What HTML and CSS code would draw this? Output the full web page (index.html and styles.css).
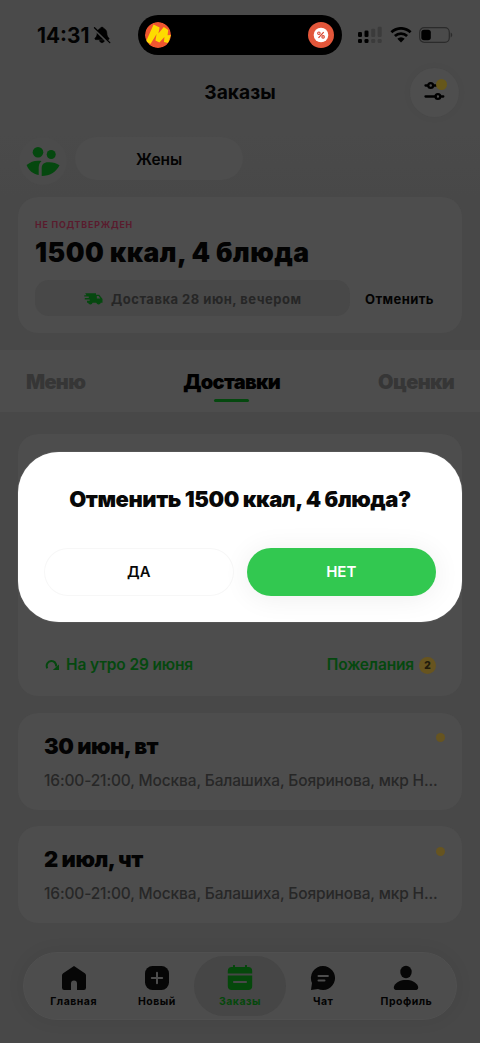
FILE: index.html
```html
<!DOCTYPE html>
<html lang="ru">
<head>
<meta charset="utf-8">
<meta name="viewport" content="width=device-width, initial-scale=1">
<title>Заказы</title>
<link rel="stylesheet" href="styles.css">
</head>
<body>
<div class="screen">
  <div class="status">
    <div class="clock"><span class="time">14:31</span>
      <svg class="bell" width="18" height="18" viewBox="0 0 18 18"><path d="M9 1.200c.9 0 1.500.5 1.700 1.300 2 .7 3 2.400 3.100 4.500.1 2.800.6 3.700 1.900 4.900.7.700.4 1.700-.6 1.700H2.900c-1 0-1.300-1-.6-1.700C3.600 10.700 4.100 9.800 4.200 7c.1-2.100 1.100-3.800 3.100-4.500C7.500 1.700 8.100 1.200 9 1.200zM6.600 14.500h4.800C11.100 15.900 10.200 16.600 9 16.600s-2.100-.7-2.400-2.100z" fill="#000" stroke="#000" stroke-width=".7"/><path d="M1.800 3.400L16 17.400" stroke="#4a4a4a" stroke-width="2.200"/><path d="M1.500 1.800L16.800 16.600" stroke="#000" stroke-width="1.300" stroke-linecap="round"/></svg>
    </div>
    <div class="island">
      <svg width="26" height="26" viewBox="0 0 26 26"><clipPath id="disc"><circle cx="13" cy="13" r="13"/></clipPath><g clip-path="url(#disc)"><circle cx="13" cy="13" r="13" fill="#f0562f"/><path d="M1 19.500L8.600 2.500l6 3-1.200 6 5.400-6.600 4.400 3-.6 5.400 3.400-.3-3 8-4-1 .4-5-5 5.500-4-2 1.200-6.500L5.500 22z" fill="#fedb00"/></g></svg>
      <svg width="26" height="26" viewBox="0 0 26 26"><circle cx="13" cy="13" r="13" fill="#e2563a"/><circle cx="13" cy="13" r="7.300" fill="#fff"/><path d="M10.500 15.900l5.200-5.700" stroke="#d9452f" stroke-width="1.200"/><circle cx="10.900" cy="11.200" r="1.250" fill="none" stroke="#d9452f" stroke-width="1.100"/><circle cx="15.100" cy="14.900" r="1.250" fill="none" stroke="#d9452f" stroke-width="1.100"/></svg>
    </div>
    <div class="signals">
      <svg width="25" height="18" viewBox="0 0 25 18"><g fill="#000"><rect x="0" y="6" width="4" height="5" rx="1.300"/><rect x="6.500" y="4.500" width="4" height="6.500" rx="1.300"/><rect x="0" y="13" width="4" height="4" rx="1.300"/><rect x="6.500" y="13" width="4" height="4" rx="1.300"/></g><g fill="#3b3b3b"><rect x="13.200" y="2.700" width="4" height="8.300" rx="1.300"/><rect x="19.700" y=".7" width="4" height="10.300" rx="1.300"/><rect x="13.200" y="13" width="4" height="4" rx="1.300"/><rect x="19.700" y="13" width="4" height="4" rx="1.300"/></g></svg>
      <svg width="22" height="16" viewBox="0 0 22 16"><g fill="none" stroke="#000" stroke-width="2.700"><path d="M1.400 5.200a13.800 13.800 0 0 1 19.200 0"/><path d="M4.900 9a8.800 8.800 0 0 1 12.200 0"/></g><path d="M7.300 11.700a5.300 5.300 0 0 1 7.400 0L11 15.500z" fill="#000"/></svg>
      <svg width="35" height="16" viewBox="0 0 35 16"><rect x=".7" y=".7" width="29.600" height="14.600" rx="4.500" fill="none" stroke="#2b2b2b" stroke-width="1.200"/><rect x="2.300" y="2.800" width="9.500" height="10.400" rx="2.700" fill="#000"/><path d="M31.700 5.600c2 .8 2 4 0 4.800z" fill="#2b2b2b"/></svg>
    </div>
  </div>

  <header class="header">
    <h1>Заказы</h1>
    <div class="filter">
      <svg width="22" height="20" viewBox="0 0 22 20"><g fill="none" stroke="#000" stroke-width="2.300" stroke-linecap="round"><path d="M1.500 4.500h2.400M9.500 4.500h9M1.500 15.500h10.200M17.500 15.500h1.800"/><circle cx="6.700" cy="4.500" r="2.400"/><circle cx="13.900" cy="15.500" r="2.400"/></g></svg>
      <i></i>
    </div>
  </header>

  <div class="people">
    <div class="group">
      <svg width="34" height="30" viewBox="0 0 34 30"><g fill="#05480f"><circle cx="12" cy="5.300" r="5.300"/><circle cx="25.200" cy="7.500" r="4.500"/><path d="M.6 18c4.600-4 9.700-5 14.900-4-2 1.800-2.800 4-2.800 7v7C7 27 2.600 23.500.6 18z"/><path d="M15.700 29V21.500c0-4 2-6.200 6.500-6.200 4.500-.2 8 .7 11.300 2.900C30 25 23.800 29 15.700 29z"/></g></svg>
    </div>
    <div class="chip">Жены</div>
  </div>

  <section class="card order">
    <div class="state">НЕ ПОДТВЕРЖДЕН</div>
    <h2>1500 ккал, 4 блюда</h2>
    <div class="order-row">
      <div class="delivery">
        <svg width="19" height="12" viewBox="0 0 19 12"><path d="M1.200.2H12v1.600h3.200L18.500 6v3.800h-1.700a2.300 2.300 0 0 1-4.500 0H8.600a2.300 2.300 0 0 1-4.500 0H3V7.800h2.700V6.500H.8V5h4V3.500H.3V2.200h2.200z" fill="#05480f"/><path d="M12.800 3v2.400h3.500L14.600 3z" fill="#484848"/></svg>
        <span>Доставка 28 июн, вечером</span>
      </div>
      <div class="cancel">Отменить</div>
    </div>
  </section>

  <nav class="tabs"><span class="t1">Меню</span><span class="t2">Доставки</span><span class="t3">Оценки</span></nav>

  <section class="card first">
    <div class="link"><svg width="15" height="12" viewBox="0 0 15 12"><path d="M2.200 9.300C.6 5.300 3 2 6.300 2c3 0 4.700 2 5 5.500" fill="none" stroke="#05480f" stroke-width="2"/><path d="M14 5.500v5.500H7.800z" fill="#05480f"/></svg><span class="l1">На утро 29 июня</span></div>
    <div class="link"><span class="l2">Пожелания</span><b>2</b></div>
  </section>
  <section class="card day"><h3 class="d1">30 июн, вт</h3><p>16:00-21:00, Москва, Балашиха, Бояринова, мкр Н...</p><i></i></section>
  <section class="card day"><h3 class="d2">2 июл, чт</h3><p>16:00-21:00, Москва, Балашиха, Бояринова, мкр Н...</p><i></i></section>

  <nav class="bar">
    <div class="item"><svg width="26" height="26" viewBox="0 0 26 26"><path d="M13 1l10.800 7.200q1.200.8 1.200 2.200v12.400Q25 25 22.800 25H16v-6.500a3 3 0 0 0-6 0V25H3.200Q1 25 1 22.800V10.400Q1 9 2.200 8.200z"/></svg><span>Главная</span></div>
    <div class="item"><svg width="26" height="26" viewBox="0 0 26 26"><rect x="1" y="1" width="24" height="24" rx="7.500"/><path d="M13 7.800v10.400M7.800 13h10.400" stroke="#4d4d4d" stroke-width="2" stroke-linecap="round"/></svg><span>Новый</span></div>
    <div class="item active"><svg width="26" height="26" viewBox="0 0 26 26"><path d="M7 2V.8M19 2V.8" stroke="#05480b" stroke-width="2" stroke-linecap="round"/><path d="M.8 8.600V6q0-4 4-4h16.400q4 0 4 4v2.600zM.8 10.600h24.400V21q0 4-4 4H4.800q-4 0-4-4z"/><path d="M7 17h12" stroke="#484848" stroke-width="2.200" stroke-linecap="round"/></svg><span>Заказы</span></div>
    <div class="item"><svg width="26" height="26" viewBox="0 0 26 26"><path d="M13 1a12 12 0 1 1-5 22.900L1 25l1-7A12 12 0 0 1 13 1z"/><path d="M8.500 11h9.400M8.500 15.500h6" stroke="#4d4d4d" stroke-width="2" stroke-linecap="round"/></svg><span>Чат</span></div>
    <div class="item"><svg width="26" height="26" viewBox="0 0 26 26"><ellipse cx="13" cy="7" rx="5.700" ry="6.200"/><path d="M13 15c5.600 0 9.600 2 11.600 5.500 1.400 2.600.2 4.500-2.200 4.500H3.600c-2.400 0-3.600-1.900-2.200-4.500C3.400 17 7.400 15 13 15z"/></svg><span>Профиль</span></div>
  </nav>

  <div class="modal" role="dialog">
    <h2>Отменить 1500 ккал, 4 блюда?</h2>
    <div class="actions"><button class="yes">ДА</button><button class="no">НЕТ</button></div>
  </div>
</div>
</body>
</html>
```
FILE: styles.css
```css
* { box-sizing: border-box; margin: 0; padding: 0; }
body { background: #484848; font-family: Inter, "Liberation Sans", sans-serif; color: #030303; }
svg { display: block; flex: none; }
.screen { position: relative; width: 480px; height: 1043px; overflow: hidden; display: flex; flex-direction: column; background: #484848; white-space: nowrap; }
.status { height: 67px; flex: none; background: #4a4a4a; display: grid; grid-template-columns: 138px 204px 1fr; align-items: start; }
.clock { display: flex; padding: 23px 0 0 37px; }
.time { width: 56px; font-size: 20.8px; font-weight: 650; line-height: 26px; }
.bell { margin-top: 3px; }
.island { margin-top: 15px; height: 40px; border-radius: 20px; background: #000; display: flex; justify-content: space-between; align-items: center; padding: 0 8px 0 7px; }
.signals { display: flex; align-items: center; gap: 7px; padding: 26px 0 0 16px; }
.header { height: 66px; flex: none; background: #4a4a4a; display: grid; grid-template-columns: 80px 1fr 80px; }
.header h1 { grid-column: 2; text-align: center; font-size: 19.200px; font-weight: 700; line-height: 50px; }
.filter { position: relative; width: 49px; height: 49px; margin: 1px 0 0 10px; border-radius: 50%; background: #4e4e4e; display: grid; place-items: center; box-shadow: 0 0 10px rgba(0,0,0,.04); }
.filter svg { margin-bottom: 3px; }
.filter i { position: absolute; left: 26px; top: 11px; width: 11px; height: 11px; border-radius: 50%; background: #66571a; }
.people { height: 64px; flex: none; display: flex; gap: 8px; padding: 4px 20px 0 19px; background: linear-gradient(#4a4a4a, #484848); }
.group { width: 48px; height: 48px; border-radius: 24px; background: #4b4b4b; display: grid; place-items: center; padding-top: 2px; }
.chip { width: 168px; height: 43px; border-radius: 22px; background: #4d4d4d; text-align: center; font-size: 15.500px; line-height: 45px; font-weight: 600; letter-spacing: -.1px; }
.card { flex: none; margin: 0 18px; border-radius: 20px; background: #4d4d4d; }
.order { height: 136px; padding: 22px 17px 0; }
.state { font-size: 8.800px; line-height: 12px; font-weight: 700; letter-spacing: .85px; color: #5a1b2d; }
.order h2 { font-size: 26.500px; line-height: 34px; margin-top: 4px; font-weight: 900; letter-spacing: .5px; word-spacing: -.3px; }
.order-row { display: flex; margin-top: 11px; }
.delivery { width: 315px; height: 36px; border-radius: 14px; background: #484848; color: #262626; display: flex; align-items: center; padding: 2px 0 0 49px; gap: 8px; font-size: 13px; font-weight: 700; letter-spacing: .5px; }
.cancel { padding-left: 15px; font-size: 13px; line-height: 38px; font-weight: 700; letter-spacing: .4px; }
.tabs { height: 62px; flex: none; margin-top: 17px; background: #4d4d4d; display: flex; justify-content: space-between; padding: 17px 26px 0; font-size: 20px; line-height: 31px; font-weight: 900; letter-spacing: -.7px; color: #363636; }
.t2 { color: #000; display: flex; flex-direction: column; align-items: center; height: 36px; }
.t2::after { content: ""; width: 35px; height: 3px; flex: none; margin-top: 1px; border-radius: 2px; background: #05480f; }
.first { height: 262px; margin-top: 22px; padding: 218px 26px 0 27px; display: flex; justify-content: space-between; align-items: flex-start; color: #05480f; font-size: 15.500px; line-height: 26px; font-weight: 600; letter-spacing: -.15px; }
.link { display: flex; align-items: center; gap: 6px; }
.link:last-child { gap: 5px; }
.link b { width: 17px; height: 17px; border-radius: 50%; background: #67541f; color: #201b0c; font-size: 10px; line-height: 17px; text-align: center; }
.day { position: relative; height: 97px; margin-top: 16.500px; padding: 18px 26px 0; }
.day h3 { font-size: 22px; line-height: 30px; font-weight: 900; letter-spacing: -.5px; }
.day p { font-size: 15.500px; line-height: 24px; margin-top: 8px; color: #272727; font-weight: 500; letter-spacing: -.15px; }
.day i { position: absolute; right: 17px; top: 20.500px; width: 9px; height: 9px; border-radius: 50%; background: #665420; }
.bar { position: absolute; left: 23px; top: 952px; width: 434px; height: 68px; border-radius: 34px; background: #4d4d4d; border: 1px solid #505050; padding: 3px 8px; display: flex; box-shadow: 0 0 18px rgba(0,0,0,.07); }
.item { flex: 1; display: flex; flex-direction: column; align-items: center; padding-top: 9px; font-size: 10.500px; line-height: 15px; font-weight: 700; letter-spacing: .5px; border-radius: 30px; fill: #060606; }
.item span { margin-top: 3px; }
.active { background: #464646; color: #05480b; fill: #05480b; flex: 0 0 92px; margin: 0 -4.400px; }
.modal { position: absolute; left: 18px; top: 452px; width: 444px; height: 170px; border-radius: 41px; background: #fff; padding: 30px 26px 0; box-shadow: 0 0 1px #aaa; overflow: hidden; color: #080808; }
.modal h2 { text-align: center; font-size: 22px; line-height: 34px; font-weight: 900; letter-spacing: -.45px; }
.actions { display: flex; gap: 13px; margin-top: 32px; }
.actions button { border: 0; height: 48px; flex: 1; border-radius: 24px; font: 600 15px/48px Inter, "Liberation Sans", sans-serif; }
.actions .yes { background: #fff; color: #080808; box-shadow: inset 0 0 0 1px #f7f7f7; font-size: 14.800px; }
.actions .no { background: #32c850; color: #fff; box-shadow: 0 2px 28px rgba(0,0,0,.07); }
```
